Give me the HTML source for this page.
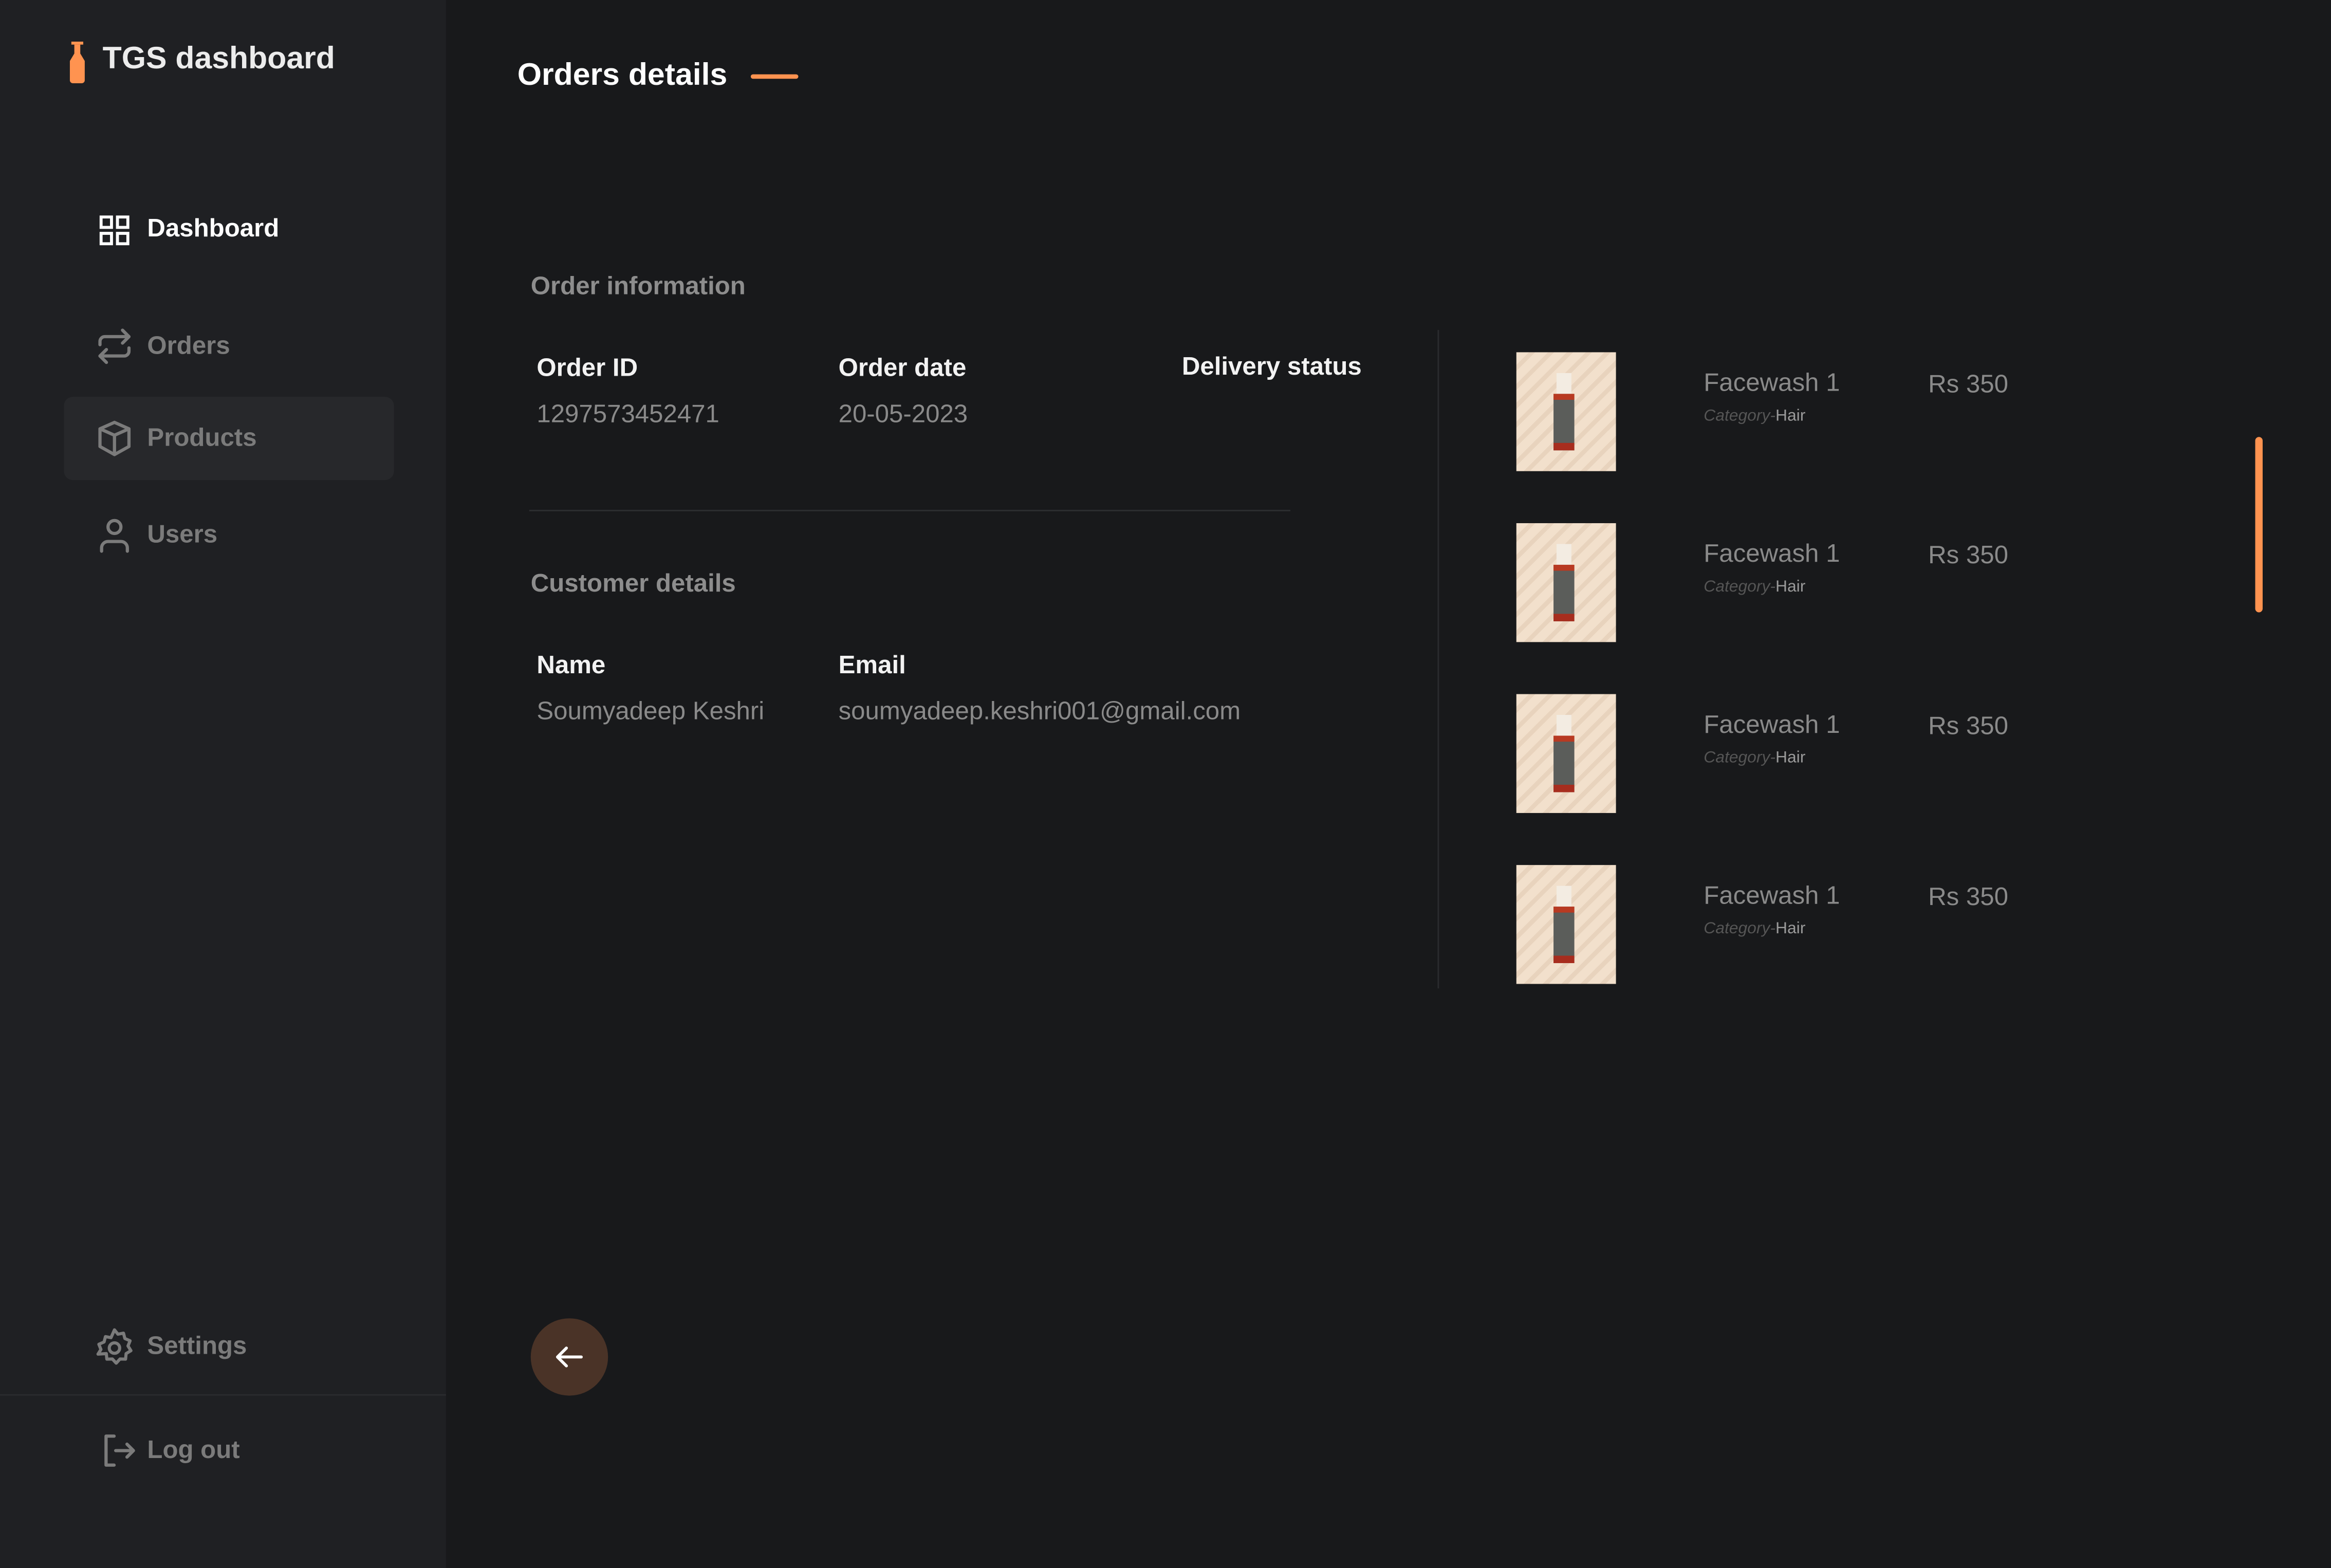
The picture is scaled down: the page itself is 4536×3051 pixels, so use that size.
<!DOCTYPE html>
<html><head><style>
html,body{margin:0;padding:0;background:#18191b;overflow:hidden}
#w{width:1568px;height:1055px;transform:scale(2.8929,2.8920);transform-origin:0 0;position:relative;font-family:"Liberation Sans",sans-serif;background:#18191b}
.a{position:absolute;white-space:nowrap}
.side{position:absolute;left:0;top:0;width:300px;height:1055px;background:#1f2023}
.nav{font-size:17px;font-weight:bold;color:#7b7b7b}
.lbl{font-size:17px;color:#f2f2f2;font-weight:bold}
.val{font-size:17px;color:#8a8a8a}
.sec{font-size:17px;color:#8d8d8d;font-weight:bold}
.img{position:absolute;left:1020px;width:67px;height:80px;background:repeating-linear-gradient(135deg,#f2e0cc 0 6px,#e8d3bd 6px 9px)}
.img .b{position:absolute;left:27px;top:14px;width:10px;height:14px;background:#f3ece2}
.img .c{position:absolute;left:25px;top:28px;width:14px;height:38px;background:#5b5d5a;border-top:4px solid #b83a22;border-bottom:5px solid #a72d1e;box-sizing:border-box}
.pn{font-size:17px;color:#8a8a8a}
.cat{font-size:11px;color:#555;font-style:italic}
.cat b{font-style:normal;font-weight:normal;color:#9a9a9a}
</style></head><body><div id="w">
<div class="side"></div>
<svg class="a" style="left:46px;top:28px" width="12" height="28" viewBox="0 0 12 28"><rect x="2" y="0" width="8" height="2" fill="#ff9350"/><path d="M4 2h4v6l3 5v13a2 2 0 0 1-2 2H3a2 2 0 0 1-2-2V13l3-5z" fill="#ff9350"/></svg>
<div class="a" style="left:69px;top:28px;font-size:21px;font-weight:bold;color:#ececec">TGS dashboard</div>

<svg class="a" style="left:66px;top:144px" width="22" height="22" viewBox="0 0 22 22" fill="none" stroke="#fff" stroke-width="2"><rect x="2" y="2" width="7" height="7"/><rect x="13" y="2" width="7" height="7"/><rect x="2" y="13" width="7" height="7"/><rect x="13" y="13" width="7" height="7"/></svg>
<div class="a lbl" style="left:99px;top:144px;color:#fff">Dashboard</div>

<svg class="a" style="left:64px;top:220px" width="26" height="26" viewBox="0 0 24 24" fill="none" stroke="#7b7b7b" stroke-width="2" stroke-linecap="round" stroke-linejoin="round"><path d="M17 2l4 4-4 4"/><path d="M3 11V9a3 3 0 0 1 3-3h15"/><path d="M7 22l-4-4 4-4"/><path d="M21 13v2a3 3 0 0 1-3 3H3"/></svg>
<div class="a nav" style="left:99px;top:223px">Orders</div>

<div class="a" style="left:43px;top:267px;width:222px;height:56px;background:#27282b;border-radius:6px"></div>
<svg class="a" style="left:64px;top:282px" width="26" height="26" viewBox="0 0 24 24" fill="none" stroke="#7b7b7b" stroke-width="2" stroke-linejoin="round"><path d="M12 2l9 4v11l-9 5-9-5V6z"/><path d="M3 6l9 4 9-4M12 10v12"/></svg>
<div class="a nav" style="left:99px;top:285px">Products</div>

<svg class="a" style="left:64px;top:347px" width="26" height="26" viewBox="0 0 24 24" fill="none" stroke="#7b7b7b" stroke-width="2" stroke-linecap="round"><circle cx="12" cy="7" r="4"/><path d="M4 22v-2a4 4 0 0 1 4-4h8a4 4 0 0 1 4 4v2"/></svg>
<div class="a nav" style="left:99px;top:350px">Users</div>

<svg class="a" style="left:63px;top:893px" width="28" height="28" viewBox="0 0 24 24" fill="none" stroke="#7b7b7b" stroke-width="1.8" stroke-linejoin="round"><circle cx="12" cy="12" r="3"/><path d="M12 1.5l2 2.5 3.2-.6.8 3.1 3 1.3-1.2 3 1.7 2.7-2.8 1.7-.3 3.2-3.2-.1-2.2 2.4-2.2-2.4-3.2.1-.3-3.2L2.5 15.5 4.2 12.8 3 9.8l3-1.3.8-3.1 3.2.6z"/></svg>
<div class="a nav" style="left:99px;top:896px">Settings</div>
<div class="a" style="left:0;top:938px;width:300px;height:1px;background:#2a2b2e"></div>
<svg class="a" style="left:66px;top:963px" width="28" height="26" viewBox="0 0 24 24" fill="none" stroke="#7b7b7b" stroke-width="2" stroke-linecap="round" stroke-linejoin="round"><path d="M9 3H4v18h5"/><path d="M10 12h11M17 8l4 4-4 4"/></svg>
<div class="a nav" style="left:99px;top:966px">Log out</div>

<div class="a" style="left:348px;top:39px;font-size:21px;font-weight:bold;color:#fff">Orders details</div>
<div class="a" style="left:505px;top:50px;width:32px;height:3px;background:#ff9350;border-radius:2px"></div>

<div class="a sec" style="left:357px;top:183px">Order information</div>
<div class="a lbl" style="left:361px;top:238px">Order ID</div>
<div class="a val" style="left:361px;top:269px">1297573452471</div>
<div class="a lbl" style="left:564px;top:238px">Order date</div>
<div class="a val" style="left:564px;top:269px">20-05-2023</div>
<div class="a lbl" style="left:795px;top:237px">Delivery status</div>
<div class="a" style="left:356px;top:343px;width:512px;height:1px;background:#2c2d30"></div>
<div class="a sec" style="left:357px;top:383px">Customer details</div>
<div class="a lbl" style="left:361px;top:438px">Name</div>
<div class="a val" style="left:361px;top:469px">Soumyadeep Keshri</div>
<div class="a lbl" style="left:564px;top:438px">Email</div>
<div class="a val" style="left:564px;top:469px">soumyadeep.keshri001@gmail.com</div>

<div class="a" style="left:967px;top:222px;width:1px;height:443px;background:#2a2b2e"></div>

<div class="img" style="top:237px"><div class="b"></div><div class="c"></div></div>
<div class="a pn" style="left:1146px;top:248px">Facewash 1</div><div class="a cat" style="left:1146px;top:274px">Category-<b>Hair</b></div><div class="a pn" style="left:1297px;top:249px">Rs 350</div>
<div class="img" style="top:352px"><div class="b"></div><div class="c"></div></div>
<div class="a pn" style="left:1146px;top:363px">Facewash 1</div><div class="a cat" style="left:1146px;top:389px">Category-<b>Hair</b></div><div class="a pn" style="left:1297px;top:364px">Rs 350</div>
<div class="img" style="top:467px"><div class="b"></div><div class="c"></div></div>
<div class="a pn" style="left:1146px;top:478px">Facewash 1</div><div class="a cat" style="left:1146px;top:504px">Category-<b>Hair</b></div><div class="a pn" style="left:1297px;top:479px">Rs 350</div>
<div class="img" style="top:582px"><div class="b"></div><div class="c"></div></div>
<div class="a pn" style="left:1146px;top:593px">Facewash 1</div><div class="a cat" style="left:1146px;top:619px">Category-<b>Hair</b></div><div class="a pn" style="left:1297px;top:594px">Rs 350</div>

<div class="a" style="left:1517px;top:294px;width:5px;height:118px;background:#ff9350;border-radius:3px"></div>

<div class="a" style="left:357px;top:887px;width:52px;height:52px;border-radius:50%;background:#4a3327"></div>
<svg class="a" style="left:371px;top:901px" width="24" height="24" viewBox="0 0 24 24" fill="none" stroke="#fff" stroke-width="2" stroke-linecap="round" stroke-linejoin="round"><path d="M20 12H4M10 6l-6 6 6 6"/></svg>
</div></body></html>
